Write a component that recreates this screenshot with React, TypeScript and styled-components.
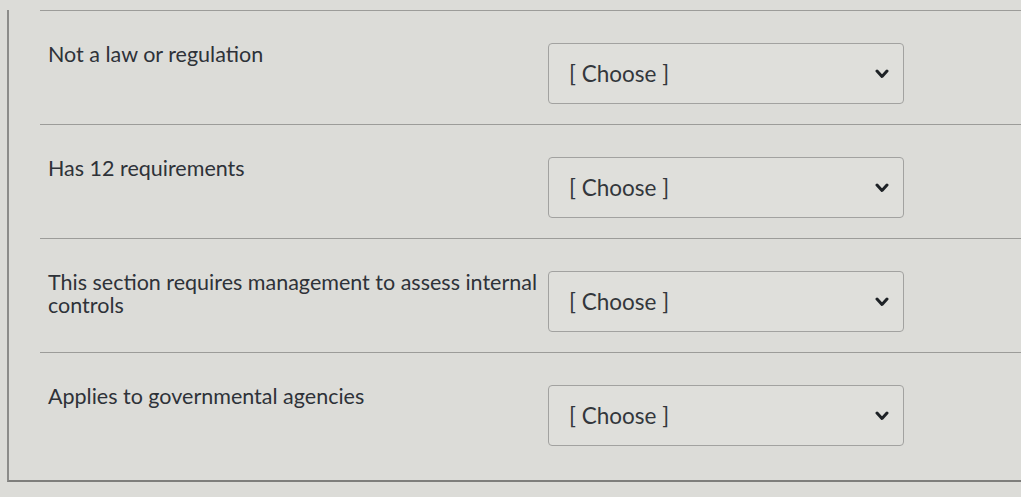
import React from 'react';
import styled, { createGlobalStyle } from 'styled-components';

const GlobalStyle = createGlobalStyle`
  html, body {
    margin: 0;
    padding: 0;
    background: #dcdcd8;
    font-family: Lato, "Open Sans", Arial, sans-serif;
  }
`;

const Page = styled.div`
  width: 1021px;
  height: 497px;
  overflow: hidden;
  padding-top: 10px;
  box-sizing: border-box;
`;

const Panel = styled.div`
  margin-left: 7px;
  border-left: 2px solid #8c8c8a;
  border-bottom: 2px solid #7e7e7c;
  padding-left: 31px;
  padding-bottom: 14px;
`;

const Row = styled.div`
  display: grid;
  grid-template-columns: 500px 356px;
  border-top: 1px solid #9c9c99;
  padding: 32px 0 20px 8px;
  align-items: start;
`;

const Label = styled.div`
  font-size: 21.5px;
  line-height: 23px;
  color: #2e3238;
  padding-right: 2px;
`;

const Select = styled.div`
  height: 61px;
  box-sizing: border-box;
  border: 1px solid #a2a2a0;
  border-radius: 4px;
  background: #dfdfdb;
  display: flex;
  align-items: center;
  justify-content: space-between;
  padding: 0 14px 0 20px;
  font-size: 22.5px;
  color: #33373c;
`;

const Chevron = () => (
  <svg width="14" height="10" viewBox="0 0 14 10">
    <polyline points="2,2 7,7.5 12,2" fill="none" stroke="#1e2226" strokeWidth="3" strokeLinecap="round" strokeLinejoin="round" />
  </svg>
);

const items = [
  'Not a law or regulation',
  'Has 12 requirements',
  'This section requires management to assess internal controls',
  'Applies to governmental agencies',
];

export default function App() {
  return (
    <>
      <GlobalStyle />
      <Page>
        <Panel>
          {items.map((text) => (
            <Row key={text}>
              <Label>{text}</Label>
              <Select>
                <span>[ Choose ]</span>
                <Chevron />
              </Select>
            </Row>
          ))}
        </Panel>
      </Page>
    </>
  );
}
